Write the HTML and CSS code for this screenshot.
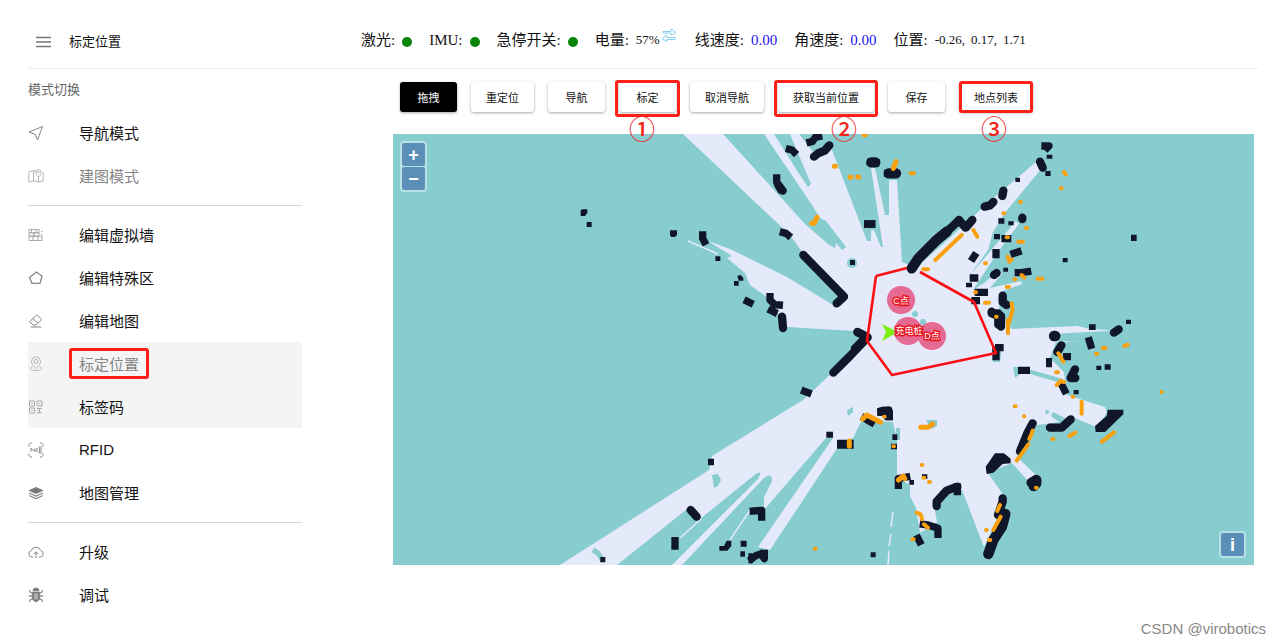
FILE: index.html
```html
<!DOCTYPE html>
<html lang="zh-CN">
<head>
<meta charset="utf-8">
<title>标定位置</title>
<link rel="stylesheet" href="styles.css">
</head>
<body>
<header class="header">
  <div class="brand">
    <button class="menu-btn" aria-label="菜单"><svg width="15" height="12" viewBox="0 0 15 12"><path d="M0 1.500h15M0 6h15M0 10.500h15" stroke="#777" stroke-width="1.300"/></svg></button>
    <h1 class="title">标定位置</h1>
  </div>
  <div class="status">
    <div class="stat">激光:<i class="dot"></i></div>
    <div class="stat">IMU:<i class="dot"></i></div>
    <div class="stat">急停开关:<i class="dot"></i></div>
    <div class="stat">电量:<span class="small battery">57%<svg class="swap" width="16" height="15" viewBox="0 0 16 15" fill="#fff" stroke="#7cc9ec" stroke-width=".9"><path d="M2 3.500h8V1l5 3.500L10 7V5H2zM14 9.500H6V7.500L1 10.500l5 3V11.500h8z"/></svg></span></div>
    <div class="stat">线速度:<span class="blue">0.00</span></div>
    <div class="stat">角速度:<span class="blue">0.00</span></div>
    <div class="stat">位置:<span class="small coords"><span>-0.26,</span><span>0.17,</span><span>1.71</span></span></div>
  </div>
</header>
<div class="body">
  <nav class="side">
    <h2 class="group">模式切换</h2>
    <a class="item" href="#"><svg class="ico" viewBox="0 0 16 16"><path d="M14.500 1.500 1 7l6 2.200L9.500 15z"/></svg>导航模式</a>
    <a class="item off" href="#"><svg class="ico" viewBox="0 0 16 16"><path d="M9 3.500 5.500 2.500.8 4v10l4.700-1.200 5 1.200 4.700-1.200V4M5.500 3v10M10.500 9.500V14M10.500 9.500C8.500 7 7.800 6 7.800 4.200a2.700 2.700 0 0 1 5.400 0C13.200 6 12.500 7 10.500 9.500z"/><circle cx="10.500" cy="4.200" r=".8"/></svg>建图模式</a>
    <hr class="rule">
    <a class="item" href="#"><svg class="ico light" viewBox="0 0 16 16"><path d="M1 2.500h10v3.300H1zM1 5.800h5v3.400H1zM6 5.800h5v3.400H6zM1 9.200h13v4.300H1zM5 9.200v4.300M10 9.200v4.300M13 4.500h1.500M13 7.500h1.500M3.500 2.500v3.300M8 2.500v3.300"/></svg>编辑虚拟墙</a>
    <a class="item" href="#"><svg class="ico" viewBox="0 0 16 16"><path d="M8.500 2 14 6.300 12 13.300H4L1.500 7.500z" stroke-width="1.300"/></svg>编辑特殊区</a>
    <a class="item" href="#"><svg class="ico" viewBox="0 0 16 16"><path d="M8.800 1.800 13.800 6.500 8 12H5L1.500 8.700zM4.800 5.500 10 10.300M2.500 14h11"/></svg>编辑地图</a>
    <a class="item off active" href="#"><svg class="ico" viewBox="0 0 16 16"><path d="M8 12.500C4.500 9 3.500 7.500 3.500 5.500a4.500 4.500 0 0 1 9 0C12.500 7.500 11.500 9 8 12.500zM4.500 10.800C1 11.500 1.500 14.500 8 14.500s7-3 3.500-3.700"/><circle cx="8" cy="5.500" r="2"/></svg><span class="marked side-mark">标定位置</span></a>
    <a class="item active" href="#"><svg class="ico light" viewBox="0 0 16 16"><path d="M1.500 2h5v5h-5zM9 2h5v5H9zM1.500 9h5v5h-5zM3.300 4.500h1.500M10.800 4.500h1.500M3.300 11.500h1.500M9 9.500h5M11.500 9.500V14M9 13.800h5M9 11.500h1"/></svg>标签码</a>
    <a class="item" href="#"><svg class="ico" viewBox="0 0 16 16"><path d="M1 4.500V2.500L2.500 1H4M12 1h1.500L15 2.500v2M15 11.500v2L13.500 15H12M4 15H2.500L1 13.500v-2M3 9.800V6.200l4 3.600V6.200M9 6v4.200M11 4.500c.8 2 .8 5 0 7M13 4v8" /></svg>RFID</a>
    <a class="item" href="#"><svg class="ico" viewBox="0 0 16 16"><path d="M8 2.500 15 5.500 8 8.500 1 5.500z" fill="#777"/><path d="m1 8 7 3 7-3M1 10.500l7 3 7-3" stroke-width="1.300"/></svg>地图管理</a>
    <hr class="rule">
    <a class="item" href="#"><svg class="ico" viewBox="0 0 16 16"><path d="M5 13H3.800a3.200 3.200 0 0 1-.5-6.300A4.800 4.800 0 0 1 12.500 6.500 3.300 3.300 0 0 1 12.500 13H11M8 14V8M5.800 10 8 7.800l2.200 2.200"/></svg>升级</a>
    <a class="item" href="#"><svg class="ico" viewBox="0 0 16 16"><path d="M5 3.500a3 2.500 0 0 1 6 0zM4.500 5h7v7.500L8 15l-3.500-2.500z" fill="#777"/><path d="M4.500 6.500 2 5V3M4.500 9H.8M4.500 11.500 2 13v2M11.500 6.500 14 5V3M11.500 9h3.700M11.500 11.500 14 13v2" stroke-width="1.300"/><path d="M7 6.500v6M9 6.500v6" stroke="#fff" stroke-width=".8"/></svg>调试</a>
  </nav>
  <main class="main">
    <div class="tools">
      <button class="btn dark">拖拽</button>
      <button class="btn">重定位</button>
      <button class="btn">导航</button>
      <button class="btn marked mark-a">标定<span class="num">①</span></button>
      <button class="btn">取消导航</button>
      <button class="btn marked mark-b">获取当前位置<span class="num">②</span></button>
      <button class="btn">保存</button>
      <button class="btn marked mark-c">地点列表<span class="num">③</span></button>
    </div>
    <div class="map">
      <svg class="canvas" viewBox="393 134 861 431" role="img" aria-label="激光地图">
        <rect x="393" y="134" width="861" height="431" fill="#87cccf"/>
        <!-- free space -->
        <path fill="#e4eafa" d="M683 134H832V150L867 241H871L871 230H874L881 247H883L871 168H875L885 215H889V180H897L902 262 916 268 973 217 983 207 1036 162 1041 169 1004 214 993 232 988 250 970 275 1016 221 1019 224 1000 249 973 290 984 283 1000 270 1002 274 990 288 1021 281 1022 284 1000 292 999 312 1012 329 1077 326 1090 329 1108 330 1108 331 1070 333 1056 334V341L1080 342H1056L1050 358 1064 372 1067 395 1105 407 1107 413 1096 427 1075 418 1060 422 1037 425 1017 457 1035 474 1028 481 1012 463 988 473 1002 493 998 517 984 547 962 490 933 500 937 522 920 533 916 508 910 496V485L897 477V440L893 422 862 420 853 438 838 447 770 550 758 547 833 438 826 438 764 510V497L772 480 764 478 682 565H672L759 478 757 473 700 519 687 509 617 565H560L709 470 712 456 803 400 867 340 855 331 787 327 767 297 750 285 745 273 727 258 732 256 708 241 730 249 787 277 833 305 845 297 803 253 790 235Z"/>
        <!-- unexplored wedges inside the free space -->
        <g fill="#87cccf">
          <path d="M723 134H764L812 205 820 218 826 221 846 247 842 250 836 243 835 248 829 245 805 224ZM774 134H790L811 184 808 187 798 172ZM799 134H835V141L818 158Z"/>
          <circle cx="852" cy="263" r="5"/><circle cx="915" cy="314" r="3"/><circle cx="923" cy="322" r="3"/>
          <path d="M712 475l6-1 3 6-3 6-4 2zM847 410l6-3v5l-5 4zM926 420h11v6l-6 3zM896 428h4v12h-4zM1013 367h8l42 12-2 4-38-11-8 6zM992 347h10l-2 15h-7zM758 473q4-2 1 4l-20 19zM764 478q8-6 8 3l-8 16z"/>
          <circle cx="1047" cy="412" r="2"/><path d="m1053 412 14 7-4 6-12-9z"/>
        </g>
        <!-- thin returns -->
        <path d="m688 241 30 13M750 510l-20 30M701 519l-21 19M893 512l-2 15m0 7-2 12m0 5-1 14" fill="none" stroke="#e4eafa" stroke-width="1.500"/>
        <path d="m593 550 5 3 5 8" fill="none" stroke="#87cccf" stroke-width="5"/>
        <!-- obstacles, north-west -->
        <g class="wall" transform="translate(660 130) scale(.333333)">
          <path class="w24" d="M430 375 552 500 530 520M355 165 368 182M366 560l3 34M592 606 620 620 585 655M462 80l12-10 20-8 14-16"/>
          <path class="w20" d="M350 144v12l10 20M450 36l8-2 8-12 10-2M388 58l8 2 6 6M370 308l8 2 6 5M128 315v10l5 10M262 514l8 4M330 500v10l14 14 14 1M334 542l8 4M632 96l16 2M683 130h25M623 282h12"/>
          <path d="M30 301h21v14l-6 6h-11l-4-5zM166 379h15v14h-15zM232 437l10-2 8 9v8h-14zM222 453h14v14h-14zM570 390h15v15h-15zM-238 240l6-2h14v11l-7 9h-13zM-220 276h15v15h-15z"/>
        </g>
        <!-- obstacles, north-east -->
        <g class="wall" transform="translate(860 130) scale(.333333)">
          <path class="w28" d="M155 415 175 385 230 330 260 305M34 97h12M86 130h22"/>
          <path class="w24" d="M255 310 285 282 297 270 317 293 337 270M374 230l16-4 10-10M430 182l-3 16M540 95l8 18M487 263v4M402 435l8-6M428 497v20l12 8M395 545l8 8 20 5v32"/>
          <path class="w20" d="M555 48h12l-5 5M408 368v6M343 378l-4 6M462 370l12-4M475 428h10l18-3M345 512h4M355 487h18M340 444h4M435 326h8M23 282h12"/>
          <path d="M560 74h17v12h-17zM556 123h16v15h-16zM466 143h14v13h-14zM415 265h18v16h-18zM445 274h16v12h-16zM402 312h18v16h-18zM430 413h14v12h-14zM318 458h18v14h-18zM608 384h15v13h-15zM813 314h17v19h-17z"/>
        </g>
        <!-- obstacles, centre and south-west -->
        <g class="wall" transform="translate(800 300) scale(.333333)">
          <path class="w24" d="M174 97 203 112 150 168 100 218"/>
          <path class="w20" d="M14 274l10 4M194 355l20 12M244 335l20-4v18M588 150v20M600 143h-4"/>
          <path d="M232 325l15-5h23l7 12v29h-20l-10-14h-15zM79 395h20v18H79zM111 419h50v27h-50zM277 403h15v17h-15zM273 431h18v17h-18z"/>
        </g>
        <g class="wall" transform="translate(560 400) scale(.333333)">
          <path class="w24" d="M392 330l18 20M1130 305 1160 272 1192 260M1130 318v-10"/>
          <path class="w20" d="M345 422v16M580 333l25-2v20M1015 256v-20l25-5M1090 373l14 2 30 10v18M1074 415l5 10M576 476l10-8 10-4M603 462l10 14v-16M1192 275v-14"/>
          <path d="M952 25l18-5h24l5 12v29h-20l-12-14h-15zM444 176h18v20h-18zM121 471h15v16h-15zM478 438h14l8-16h14v16l-12 14h-24zM542 422h18v18h-18zM541 454h14v16h-14zM565 460h12v30h-12zM932 457h15v15h-15zM1086 223h16v14h-16zM1048 240h14v14h-14z"/>
        </g>
        <!-- obstacles, south-east -->
        <g class="wall" transform="translate(980 310) scale(.333333)">
          <path d="M17 470 45 430H72L92 446V460L68 462 40 488 20 492ZM345 348 380 318 383 299H430V313L412 330 375 366H347Z"/>
          <path class="w28" d="M222 78h4M155 518l14-8v10l-8 8M76 612 66 650 40 690 25 732"/>
          <path class="w24" d="M158 340 142 370 120 424M210 353h35L272 328M244 106 232 126M285 178 272 204 286 204M402 68l14-10M68 565v10L54 615M35 10h20v34"/>
          <path class="w20" d="M328 92l4 14M125 181h14M248 230l6 12M262 140h-2"/>
          <path d="M198 144h18v28h-18zM327 43h20v17h-20zM438 29h15v13h-15zM349 167h15v13h-15zM374 163h18v16h-18zM281 240h15v13h-15z"/>
        </g>
        <!-- live laser hits -->
        <g class="laser" transform="translate(660 130) scale(.333333)"><path class="w15" d="M455 280h8l8-18M700 115l8-20M523 109h3M570 142h3M593 141h3M612 14h4"/></g>
        <g class="laser" transform="translate(860 130) scale(.333333)"><path d="M226 390 305 315M340 300l12 20M190 418h14M152 130h10M612 126l5 7M603 175h2M480 216h3M430 250h3M498 294h3M475 335h14M440 322h4M443 380l5 15 7-7M375 400h3M485 435l8 8M463 448h3M533 446h14M440 471h7M345 487h3M375 518h12M455 520l3 20-12 40"/></g>
        <g class="laser" transform="translate(980 310) scale(.333333)"><path d="M84 30v40M48 20h2M348 131h4M368 114h9M433 108l10-4M235 130l15 25M228 187h6M230 225l12-12 10 3M278 260h2M305 275v36M104 289h3M132 319h1M155 370 158 362M153 375l-5 12M145 403 110 452M217 387h3M268 378l18-10M366 395 402 367M545 245v2M168 533h2M60 585l-8 18M62 620l-22 40M27 690h4M18 660h2"/></g>
        <g class="laser" transform="translate(560 400) scale(.333333)"><path class="w15" d="M908 57l12-12 42 22M1082 82h22l14-10M868 123v16M1015 240l15-12 4 8"/><path d="M1085 195h2M1107 246h3M1000 139h2M1070 338l12 5 4 15M1092 373l12 10M1057 418h4M764 446h3M1090 233h3M972 50h2"/></g>
        <path d="m876 276 31-8M920 272l54 30 22 51-104 22-25-34 9-65" fill="none" stroke="#fb0f13" stroke-width="2.600" stroke-linejoin="round"/>
        <path d="m882 324 16 8-16 9 4-9z" fill="#7fee14"/>
        <g class="place">
          <circle cx="901" cy="300" r="14"/><circle cx="908" cy="331" r="14"/><circle cx="932" cy="336" r="14"/>
          <text x="901" y="304">C点</text><text x="909" y="334">充电桩</text><text x="932" y="339">D点</text>
        </g>
      </svg>
      <div class="ctl zoom"><button aria-label="放大">+</button><button aria-label="缩小">−</button></div>
      <div class="ctl info"><button aria-label="信息">i</button></div>
    </div>
  </main>
</div>
<footer class="foot">CSDN @virobotics</footer>
</body>
</html>
```

FILE: styles.css
```css
* { box-sizing: border-box; }
body {
  margin: 0;
  background: #fff;
  color: #111;
  font-family: "Liberation Sans", "Noto Sans CJK SC", sans-serif;
}
button { font-family: inherit; }
.header {
  display: flex;
  align-items: center;
  gap: 59px;
  height: 69px;
  margin: 0 22px 0 28px;
  padding-top: 12px;
  border-bottom: 1px solid #ececec;
}
.brand { display: flex; align-items: center; gap: 18px; flex: 0 0 274px; padding: 4px 0 0 8px; }
.menu-btn { display: flex; padding: 0; border: 0; background: none; }
.title { margin: 0; font-size: 13px; line-height: 20px; font-weight: 400; }
.status {
  display: flex;
  gap: 17px;
  font-family: "Liberation Serif", "Noto Sans CJK SC", serif;
  font-size: 15px;
  line-height: 24px;
  white-space: nowrap;
}
.stat { display: flex; align-items: center; gap: 7px; }
.dot { width: 10px; height: 10px; margin-top: 4px; border-radius: 50%; background: #078507; }
.small { font-size: 13px; }
.battery { display: flex; }
.swap { margin: 0 1px; }
.coords { display: flex; gap: 6px; }
.blue { color: #1b12ee; }

.body { display: flex; padding-left: 28px; }
.side { flex: 0 0 274px; }
.group { margin: 0; font-size: 13px; line-height: 42px; font-weight: 400; color: #666; }
.item {
  display: flex;
  align-items: center;
  gap: 35px;
  height: 43px;
  font-size: 15px;
  color: #111;
  text-decoration: none;
}
.ico { width: 16px; height: 16px; fill: none; stroke: #888; stroke-width: 1; }
.light { stroke: #aaa; }
.off { color: #858585; }
.off .ico { stroke: #b4b4b4; }
.active { background: #f4f4f4; }
.rule { height: 1px; margin: 8px 0 7px; border: 0; background: #d4d4d4; }

.marked { position: relative; }
.marked::after {
  content: "";
  position: absolute;
  inset: -2px -4px -5px;
  border: 3px solid #fb2018;
  border-radius: 3px;
}
.side-mark::after { inset: -5px -10px; }
.btn.mark-c::after { inset: -1px 0; }

.main { flex: 1; min-width: 0; padding: 0 26px 0 91px; }
.tools { display: flex; gap: 14px; padding: 13px 7px 22px; }
.btn {
  min-width: 57px;
  height: 30px;
  padding: 0 15px;
  border: 0;
  border-radius: 3px;
  background: #fff;
  color: #111;
  font-size: 11px;
  white-space: nowrap;
  box-shadow: 0 1px 3px rgba(0, 0, 0, .35);
}
.dark { background: #000; color: #fff; }
.num {
  position: absolute;
  z-index: 1;
  left: 10px;
  top: 33px;
  font-size: 26px;
  line-height: 26px;
  color: #f0281e;
  font-family: "Noto Sans CJK SC", sans-serif;
  font-weight: 500;
}
.mark-b .num { left: 53px; }
.mark-c .num { left: 22px; }

.map { position: relative; }
.canvas { display: block; width: 100%; height: auto; }
.wall { fill: #11172a; stroke: none; }
.wall .w20, .wall .w24, .wall .w28, .laser path { fill: none; stroke: #11172a; stroke-linejoin: round; }
.wall .w20 { stroke-width: 22; stroke-linecap: square; }
.wall .w24 { stroke-width: 25; stroke-linecap: round; }
.wall .w28 { stroke-width: 31; stroke-linecap: round; }
.laser path { stroke: #f9a00f; stroke-width: 12; stroke-linecap: round; }
.laser .w15 { stroke-width: 15; }
.place circle { fill: #e5608b; fill-opacity: .92; }
.place text {
  fill: #fff;
  stroke: #e81420;
  stroke-width: 3;
  stroke-linejoin: round;
  paint-order: stroke;
  font-size: 9px;
  text-anchor: middle;
}
.ctl { position: absolute; padding: 2px; border-radius: 4px; background: rgba(255, 255, 255, .4); }
.ctl button {
  display: block;
  width: 23px;
  height: 23px;
  padding: 0;
  border: 0;
  border-radius: 2px;
  background: #5b8fb9;
  color: #fff;
  font-size: 18px;
  line-height: 22px;
  font-weight: 700;
}
.zoom { left: 7px; top: 7px; }
.zoom button + button { margin-top: 1px; }
.info { right: 8px; bottom: 7px; }
.foot { padding-right: 14px; font-size: 15px; line-height: 26px; text-align: right; color: #888; }
```
